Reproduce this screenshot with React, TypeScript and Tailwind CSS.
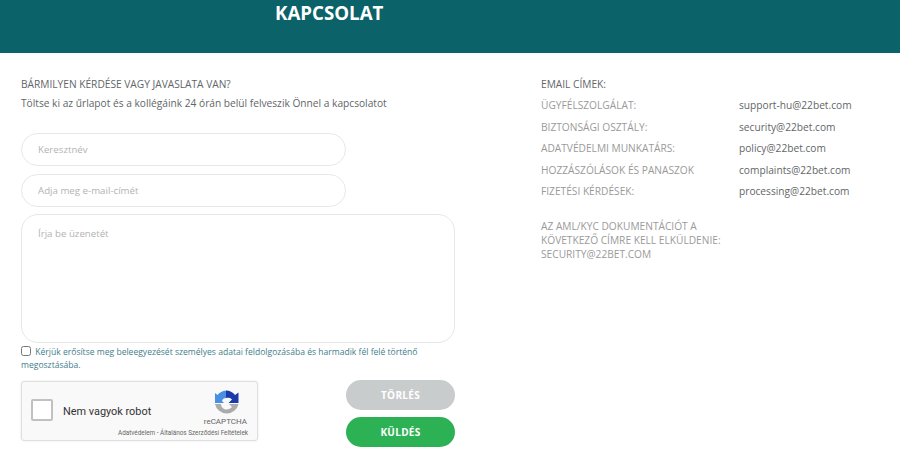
const font = "font-['Open_Sans',sans-serif]"

const emails = [
  { label: 'ÜGYFÉLSZOLGÁLAT:', email: 'support-hu@22bet.com' },
  { label: 'BIZTONSÁGI OSZTÁLY:', email: 'security@22bet.com' },
  { label: 'ADATVÉDELMI MUNKATÁRS:', email: 'policy@22bet.com' },
  { label: 'HOZZÁSZÓLÁSOK ÉS PANASZOK', email: 'complaints@22bet.com' },
  { label: 'FIZETÉSI KÉRDÉSEK:', email: 'processing@22bet.com' },
]

function RecaptchaLogo() {
  return (
    <svg width="25" height="26" viewBox="0 0 25 26" className="block">
      <path d="M13 0.500 A12 12 0 0 0 3.500 5 L1 3 L1 13 L10 13 L8 11 C8.500 9 10 8 12 8 L12 0.500 Z" fill="#4a90e2" />
      <path d="M12 0.500 A12 12 0 0 1 21 5 L24.500 2.500 L24.500 13 L14.500 13 L18 9.500 C16.500 8 15 7.500 12 8 Z" fill="#1c3aa9" />
      <path d="M1 14 L7 14 C7 17.500 10 19.500 12.500 19.500 C15 19.500 16.500 18.500 18 17 L15 14 L24.500 14 A12 12 0 0 1 1 14 Z" fill="#ababab" />
    </svg>
  )
}

function Recaptcha() {
  return (
    <div className="w-[237px] h-[60px] mt-[9px] bg-[#f9f9f9] border border-[#dfdfdf] rounded-[3px] shadow-[0_0_3px_rgba(0,0,0,0.08)] flex font-['Roboto',sans-serif] relative">
      <div className="w-[22px] h-[22px] ml-[9px] mt-[17px] bg-white border-2 border-[#c1c1c1] rounded-[2px]" />
      <span className="ml-[10px] mt-[21px] text-[10.900px] leading-[18px] text-[#333]">Nem vagyok robot</span>
      <div className="absolute left-[192px] top-[8px]">
        <RecaptchaLogo />
      </div>
      <span className="absolute right-[10px] top-[35px] text-[8px] leading-[10px] text-[#666]">reCAPTCHA</span>
      <span className="absolute right-[9px] top-[47px] text-[6.350px] leading-[8px] text-[#666] whitespace-nowrap">
        Adatvédelem - Általános Szerződési Feltételek
      </span>
    </div>
  )
}

export default function App() {
  return (
    <div className={`${font} w-[900px] h-[457px] overflow-hidden bg-white`}>
      <header className="h-[53px] bg-[#0b6269] pl-[275px]">
        <h1 className="text-white text-[18.700px] leading-[26px] font-bold">KAPCSOLAT</h1>
      </header>
      <main className="flex pl-[21px] pt-[22px]">
        <section className="w-[434px]">
          <p className="text-[10.180px] leading-[18px] text-[#5f6668]">BÁRMILYEN KÉRDÉSE VAGY JAVASLATA VAN?</p>
          <p className="text-[10.180px] leading-[18px] mt-px text-[#5f6668]">
            Töltse ki az űrlapot és a kollégáink 24 órán belül felveszik Önnel a kapcsolatot
          </p>
          <form className="mt-[21px]">
            <input
              placeholder="Keresztnév"
              className="block w-[325px] h-[33px] border border-[#e6e8e8] rounded-[17px] px-4 text-[9.700px] outline-none placeholder:text-[#b3b3b3]"
            />
            <input
              placeholder="Adja meg e-mail-címét"
              className="block w-[325px] h-[33px] mt-2 border border-[#e6e8e8] rounded-[17px] px-4 text-[9.700px] outline-none placeholder:text-[#b3b3b3]"
            />
            <textarea
              placeholder="Írja be üzenetét"
              className="block w-[434px] h-[129px] mt-[7px] border border-[#e6e8e8] rounded-[17px] px-4 py-3 text-[9.700px] outline-none resize-none placeholder:text-[#b3b3b3]"
            />
            <label className="block mt-[3px] text-[8.570px] leading-[13px] text-[#3f7d8c]">
              <input type="checkbox" className="w-[10px] h-[10px] mr-[2px] align-[-1px]" />
              {' '}Kérjük erősítse meg beleegyezését személyes adatai feldolgozásába és harmadik fél felé történő megosztásába.
            </label>
            <div className="flex justify-between">
              <Recaptcha />
              <div className="flex flex-col gap-[7px] mt-2">
                <button type="button" className="w-[109px] h-[30px] rounded-[15px] bg-[#c8cccd] text-white text-[10px] font-bold tracking-[0.3px]">
                  TÖRLÉS
                </button>
                <button type="button" className="w-[109px] h-[30px] rounded-[15px] bg-[#2db155] text-white text-[10px] font-bold tracking-[0.3px]">
                  KÜLDÉS
                </button>
              </div>
            </div>
          </form>
        </section>
        <aside className="ml-[86px] w-[340px] text-[10.180px]">
          <p className="leading-[18px] text-[#5f6668]">EMAIL CÍMEK:</p>
          <dl className="mt-[2px]">
            {emails.map((row) => (
              <div key={row.email} className="flex h-[21.500px] items-center">
                <dt className="w-[198px] text-[#9a9a9a]">{row.label}</dt>
                <dd className="text-[#5f6668]">{row.email}</dd>
              </div>
            ))}
          </dl>
          <p className="w-[200px] mt-[16px] leading-[14px] text-[#9a9a9a]">
            AZ AML/KYC DOKUMENTÁCIÓT A KÖVETKEZŐ CÍMRE KELL ELKÜLDENIE: SECURITY@22BET.COM
          </p>
        </aside>
      </main>
    </div>
  )
}
